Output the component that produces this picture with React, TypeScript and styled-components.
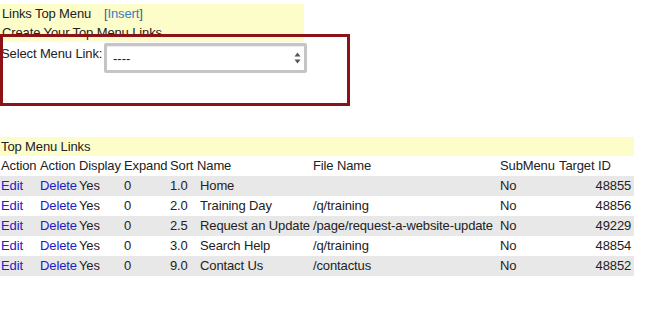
import React from "react";
import styled, { createGlobalStyle } from "styled-components";

const Global = createGlobalStyle`
  html, body { margin: 0; padding: 0; background: #fff; }
  body {
    font-family: "Liberation Sans", Arial, Helvetica, sans-serif;
    font-size: 13px;
    letter-spacing: -0.12px;
    color: #222;
  }
`;

const Page = styled.div`
  position: relative;
  width: 667px;
  height: 309px;
  padding-top: 4px;
  box-sizing: border-box;
`;

const InfoPanel = styled.div`
  width: 304px;
  background: #fdfdca;
  padding: 0 2px;
  box-sizing: border-box;
  line-height: 19px;
`;

const TitleLine = styled.div`
  display: flex;
`;

const Title = styled.span`
  width: 102px;
`;

const InsertLink = styled.a`
  color: #3a7cc2;
  text-decoration: none;
`;

const Bracket = styled.span`
  color: #3b5a86;
`;

const SelectRow = styled.div`
  display: flex;
  align-items: flex-start;
  padding-left: 1px;
  margin-top: 1px;
  height: 30px;
`;

const Label = styled.label`
  width: 103px;
  padding-top: 3px;
  line-height: 15px;
  white-space: nowrap;
`;

const SelectWrap = styled.div`
  position: relative;
  width: 203px;
  height: 30px;
`;

const FakeSelect = styled.select`
  appearance: none;
  -webkit-appearance: none;
  width: 100%;
  height: 100%;
  box-sizing: border-box;
  border: 3px solid #c5c5c5;
  border-radius: 2px;
  background: #fff;
  box-shadow: inset 0 1px 1px rgba(0,0,0,0.08);
  font-family: "Liberation Sans", Arial, sans-serif;
  font-size: 13px;
  color: #222;
  padding: 0 0 0 6px;
  outline: none;
`;

const Arrows = styled.svg`
  position: absolute;
  right: 6px;
  top: 9px;
  pointer-events: none;
`;

const Annotation = styled.div`
  position: absolute;
  left: 0;
  top: 34px;
  width: 350px;
  height: 72px;
  box-sizing: border-box;
  border: 3px solid #8d1218;
  pointer-events: none;
`;

const Table = styled.table`
  margin-top: 64px;
  width: 634px;
  table-layout: fixed;
  border-collapse: collapse;
  border-spacing: 0;
  font-size: 13px;
`;

const CaptionCell = styled.td`
  background: #fdfdca;
  height: 19px;
  padding: 0 1px;
  line-height: 19px;
`;

const HeadCell = styled.td`
  height: 20px;
  padding: 0 1px;
  white-space: nowrap;
  line-height: 20px;
`;

const Row = styled.tr<{ $shade: boolean }>`
  background: ${(p) => (p.$shade ? "#e8e8e8" : "transparent")};
`;

const Cell = styled.td<{ $align?: "left" | "right"; $indent?: number }>`
  height: 20px;
  line-height: 20px;
  padding: 0 ${(p) => (p.$align === "right" ? 3 : 1)}px 0 ${(p) => p.$indent ?? 1}px;
  text-align: ${(p) => p.$align ?? "left"};
  white-space: nowrap;
  overflow: hidden;
`;

const ActionLink = styled.a`
  color: #2020c8;
  text-decoration: none;
`;

const widths = [39, 39, 45, 46, 27, 116, 187, 59, 76];
const headers = ["Action", "Action", "Display", "Expand", "Sort", "Name", "File Name", "SubMenu", "Target ID"];

const rows = [
  { sort: "1.0", name: "Home", file: "", id: "48855" },
  { sort: "2.0", name: "Training Day", file: "/q/training", id: "48856" },
  { sort: "2.5", name: "Request an Update", file: "/page/request-a-website-update", id: "49229" },
  { sort: "3.0", name: "Search Help", file: "/q/training", id: "48854" },
  { sort: "9.0", name: "Contact Us", file: "/contactus", id: "48852" },
];

export default function App() {
  return (
    <>
      <Global />
      <Page>
        <InfoPanel>
          <TitleLine>
            <Title>Links Top Menu</Title>
            <Bracket>[</Bracket>
            <InsertLink href="#">Insert</InsertLink>
            <Bracket>]</Bracket>
          </TitleLine>
          <div>Create Your Top Menu Links</div>
        </InfoPanel>
        <SelectRow>
          <Label htmlFor="menu-link">Select Menu Link:</Label>
          <SelectWrap>
            <FakeSelect id="menu-link" defaultValue="none">
              <option value="none">----</option>
            </FakeSelect>
            <Arrows width="7" height="12" viewBox="0 0 7 12">
              <path d="M3.5 0.5 L6.5 4.5 L0.5 4.5 Z" fill="#555" />
              <path d="M3.5 11.5 L6.5 7.5 L0.5 7.5 Z" fill="#555" />
            </Arrows>
          </SelectWrap>
        </SelectRow>
        <Table>
          <colgroup>
            {widths.map((w, i) => (
              <col key={i} style={{ width: w }} />
            ))}
          </colgroup>
          <tbody>
            <tr>
              <CaptionCell colSpan={9}>Top Menu Links</CaptionCell>
            </tr>
            <tr>
              {headers.map((h, i) => (
                <HeadCell key={i}>{h}</HeadCell>
              ))}
            </tr>
            {rows.map((r, i) => (
              <Row key={r.id} $shade={i % 2 === 0}>
                <Cell><ActionLink href="#">Edit</ActionLink></Cell>
                <Cell><ActionLink href="#">Delete</ActionLink></Cell>
                <Cell>Yes</Cell>
                <Cell>0</Cell>
                <Cell>{r.sort}</Cell>
                <Cell $indent={4}>{r.name}</Cell>
                <Cell>{r.file}</Cell>
                <Cell>No</Cell>
                <Cell $align="right">{r.id}</Cell>
              </Row>
            ))}
          </tbody>
        </Table>
        <Annotation />
      </Page>
    </>
  );
}
